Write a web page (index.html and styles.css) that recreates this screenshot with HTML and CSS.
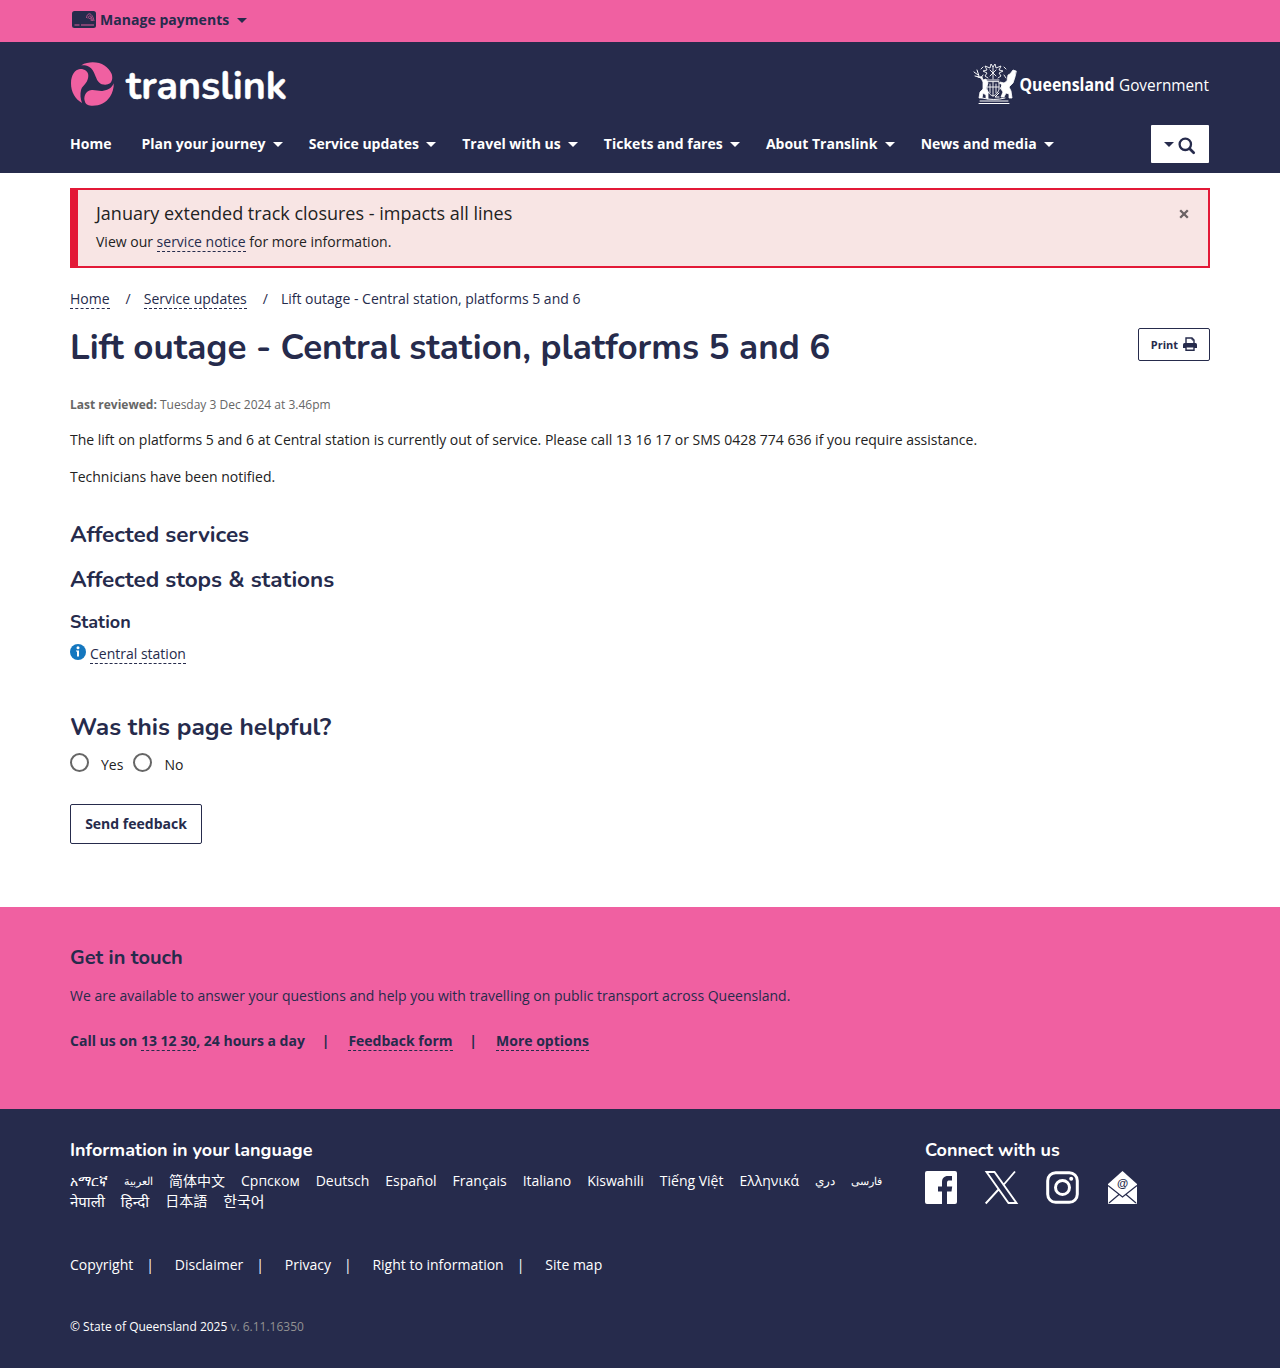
FILE: index.html
```html
<!DOCTYPE html>
<html lang="en">
<head>
<meta charset="utf-8">
<title>Lift outage - Central station, platforms 5 and 6 | Translink</title>
<link rel="stylesheet" href="styles.css">
</head>
<body>
<div class="topbar"><div class="container topbar-inner">
  <svg class="card-icon" width="24" height="17" viewBox="0 0 24 17"><rect width="24" height="17" rx="2.500" fill="#262b4c"/><path d="M2.500 14h5M9 14h13" stroke="#f060a1" stroke-width=".9"/><path d="M14.500 7c.5-6 6-6 7.500 3M16 7.500c1-4 3.500-4 4.500 2.500M17.500 8c.6-2 1.300-2 1.800 2" fill="none" stroke="#f060a1" stroke-width=".7"/></svg>
  <span class="topbar-label">Manage payments</span><i class="caret"></i>
</div></div>
<header class="header"><div class="container">
  <div class="brand">
    <svg class="logo" width="222" height="54" viewBox="0 0 222 54">
      <g fill="#f060a1">
        <path d="M11 3.400C15 1 19 .3 22.700.3c9 0 16 4.700 19 11.700 1.500 5-.2 8-1.700 9.300-2 1.500-5 1.600-8.300 1-4-2-5-5.300-6.700-9.300-1.300-3.500-2.800-6.600-6-8.200C16.500 3.500 14 3.100 11 3.400z"/>
        <path d="M1 21.300C1 13 5 7.500 10 7c4.500-.2 8.300 2.500 8.300 6.500 0 2.500-.6 4-1.600 6.200-2 3.300-5 5-5.700 8.300-1 4.500-.6 8.500 1 13C5 37 1 30 1 21.300z"/>
        <path d="M43.700 21.300C44 26 42.500 31 40 34.700c-4 6-10 9-17.300 9-4.200 0-7-1.200-7.700-4-.9-2-.9-4.500 0-6.700 1.200-3 3.500-4.700 6.700-5 4-.3 8 1.500 11.600.7 5.700-.8 8.700-3.400 10.400-7.400z"/>
      </g>
      <text class="wordmark" x="56" y="37" textLength="161" lengthAdjust="spacingAndGlyphs">translink</text>
    </svg>
    <svg class="crest" width="240" height="44" viewBox="0 0 240 44">
      <g transform="translate(0 -1)" fill="none" stroke="#fff" stroke-linecap="round">
        <path d="M6 41.500h30M7 39h28M9 36q12 3 23 0" stroke-width="1"/>
        <path d="M1 10l4 3M2 14l4 1M4 8l2 6" stroke-width="1"/>
        <path d="M5 15l3 1 2 4v7l-3 3-1 6h3l1-5 3 2v3l2 1v-7l-2-4 2-5-2-4-3 1-1-3z" fill="#fff" stroke-width=".8"/>
        <path d="M43 9l-3-1-3 4-2 1-1 6-3 2-4-1 2 4-1 3 2 3-2 5h3l2-4 3 1v4h3l-1-7-2-4 4-4 2-6z" fill="#fff" stroke-width=".8"/>
        <path d="M27 27l3-5-4-1M26 31l-4 4h4" stroke-width="1"/>
        <path d="M14 20v6c0 4 3 7 6 8 3-1 6-4 6-8v-6zM14 25h12M20 20v14M17 22v9M23 22v9" stroke-width=".9"/>
        <path d="M14 18h12M15 16l-3-2 2-3-4-2 4-1-2-4 5 2 1-4 2 3 2-3 1 4 5-2-2 4 4 1-4 2 2 3-3 2M17 8l6 6M23 8l-6 6M20 5v12M10 13l-2 3M31 13l2 3M10 5l-2 2M31 5l2 2" stroke-width=".9"/>
      </g>
      <text class="crest-strong" x="46.500" y="28" textLength="95" lengthAdjust="spacingAndGlyphs">Queensland</text>
      <text class="crest-light" x="146" y="28" textLength="90" lengthAdjust="spacingAndGlyphs">Government</text>
    </svg>
  </div>
  <nav class="nav">
    <a class="nav-home">Home</a>
    <a>Plan your journey<i class="caret"></i></a>
    <a>Service updates<i class="caret"></i></a>
    <a>Travel with us<i class="caret"></i></a>
    <a>Tickets and fares<i class="caret"></i></a>
    <a>About Translink<i class="caret"></i></a>
    <a>News and media<i class="caret"></i></a>
    <span class="search"><i class="caret caret-small"></i><svg width="18" height="18" viewBox="0 0 18 18"><circle cx="7.300" cy="7.300" r="5.700" fill="none" stroke="#262b4c" stroke-width="2.300"/><path d="M11.700 11.700l4 4" stroke="#262b4c" stroke-width="2.700" stroke-linecap="round"/></svg></span>
  </nav>
</div></header>
<main class="container main">
  <section class="alert">
    <div><div class="alert-title">January extended track closures - impacts all lines</div>
    <div class="alert-text">View our <a class="link">service notice</a> for more information.</div></div>
    <svg class="close" width="10" height="10" viewBox="0 0 10 10"><path d="M1.200 1.200l7.600 7.600M8.800 1.200L1.200 8.800" stroke="#6b6264" stroke-width="2.300"/></svg>
  </section>
  <div class="breadcrumb"><a class="link">Home</a><span class="slash">/</span><a class="link">Service updates</a><span class="slash">/</span><span>Lift outage - Central station, platforms 5 and 6</span></div>
  <div class="title-row"><h1>Lift outage - Central station, platforms 5 and 6</h1>
    <button class="print">Print<svg width="14" height="14" viewBox="0 0 14 14"><path d="M3 7V1h6l2 2v4" fill="#fff" stroke="#262b4c" stroke-width="1.400"/><path d="M9 1v2h2" fill="none" stroke="#262b4c"/><path d="M1.500 6h11q1.500 0 1.500 1.500V11H0V7.500Q0 6 1.500 6z" fill="#262b4c"/><path d="M3 9.700h8v3.500H3z" fill="#fff" stroke="#262b4c" stroke-width="1.400"/></svg></button>
  </div>
  <div class="reviewed"><b>Last reviewed:</b> Tuesday 3 Dec 2024 at 3.46pm</div>
  <p>The lift on platforms 5 and 6 at Central station is currently out of service. Please call 13 16 17 or SMS 0428 774 636 if you require assistance.</p>
  <p>Technicians have been notified.</p>
  <h2 class="services">Affected services</h2>
  <h2 class="stops">Affected stops &amp; stations</h2>
  <h3>Station</h3>
  <div class="station"><svg width="16" height="16" viewBox="0 0 16 16"><circle cx="8" cy="8" r="8" fill="#1477bf"/><circle cx="8" cy="3.700" r="1.500" fill="#fff"/><path d="M6 6.500h3v6H7V7.500H6z" fill="#fff"/></svg><a class="link">Central station</a></div>
  <h2 class="helpful">Was this page helpful?</h2>
  <div class="choices"><label><i class="radio"></i><span>Yes</span></label><label><i class="radio"></i><span>No</span></label></div>
  <button class="feedback">Send feedback</button>
</main>
<section class="touch"><div class="container">
  <h2 class="touch-title">Get in touch</h2>
  <p class="touch-text">We are available to answer your questions and help you with travelling on public transport across Queensland.</p>
  <div class="touch-links"><span>Call us on <a class="link">13 12 30</a>, 24 hours a day</span><span class="bar">|</span><a class="link">Feedback form</a><span class="bar">|</span><a class="link">More options</a></div>
</div></section>
<footer class="footer"><div class="container">
  <div class="footer-top">
    <div class="languages"><h3 class="footer-title">Information in your language</h3>
      <div class="lang-row"><span>አማርኛ</span><span class="arabic">العربية</span><span>简体中文</span><span>Српском</span><span>Deutsch</span><span>Español</span><span>Français</span><span>Italiano</span><span>Kiswahili</span><span>Tiếng Việt</span><span>Ελληνικά</span><span class="arabic dari">دري</span><span class="arabic farsi">فارسی</span></div>
      <div class="lang-row lang-row-second"><span class="larger">नेपाली</span><span class="larger">हिन्दी</span><span>日本語</span><span class="larger">한국어</span></div>
    </div>
    <div class="connect"><h3 class="footer-title">Connect with us</h3>
      <div class="social">
        <svg width="32" height="33" viewBox="0 0 32 33"><path d="M2 0h28q2 0 2 2v29q0 2-2 2h-8V20.500h4.500l.7-5H22v-3.500c0-2 .8-2.500 2.500-2.500H27V5h-4c-4 0-6 2.500-6 6v4.500h-4v5h4V33H2q-2 0-2-2V2Q0 0 2 0z" fill="#fff"/></svg>
        <svg width="33" height="33" viewBox="0 0 33 33"><path d="M1.500 1h8l22 31h-8zM30 .5L18 14.500M13.500 18.500L.7 32.500" fill="none" stroke="#fff" stroke-width="1.900"/></svg>
        <svg width="33" height="33" viewBox="0 0 33 33"><rect x="1.700" y="1.700" width="29.600" height="29.600" rx="8" fill="none" stroke="#fff" stroke-width="3"/><circle cx="16.500" cy="16.500" r="7" fill="none" stroke="#fff" stroke-width="3"/><circle cx="25.200" cy="7.800" r="2" fill="#fff"/></svg>
        <svg width="29" height="33" viewBox="0 0 29 33"><path d="M0 13L14.500 0 29 13v19q0 1-1 1H1q-1 0-1-1z" fill="#fff"/><path d="M0 14.500l14.500 11.500 14.500-11.500M1 32l10-8.500M28 32l-10-8.500" fill="none" stroke="#262b4c" stroke-width="1.200"/><text class="at" x="14.500" y="16" text-anchor="middle">@</text></svg>
      </div>
    </div>
  </div>
  <div class="legal"><a>Copyright</a><span>|</span><a>Disclaimer</a><span>|</span><a>Privacy</a><span>|</span><a>Right to information</a><span>|</span><a>Site map</a></div>
  <div class="copyright">© State of Queensland 2025 <span>v. 6.11.16350</span></div>
</div></footer>
</body>
</html>
```

FILE: styles.css
```css
*{box-sizing:border-box}
body{margin:0;background:#fff;color:#222;font:14px/20px "Open Sans","Noto Sans","Noto Sans CJK SC","Noto Sans CJK KR",sans-serif}
svg{display:block;flex:none;overflow:visible}
h1,h2,h3,p{margin:0}
h1,h2,h3{font-family:Nunito,Lato,sans-serif;font-weight:700;color:#262b4c;white-space:nowrap}
.container{width:1140px;margin:0 auto}
.caret{display:inline-block;border:5px solid transparent;border-top:5px solid currentColor;border-bottom:0}
.link{border-bottom:1px dashed #262b4c;color:#262b4c}
.topbar{height:42px;background:#f060a1;color:#262b4c}
.topbar-inner{display:flex;align-items:center;height:40px;padding-left:2px}
.card-icon{margin:-2px 4px 0 0}
.topbar-label{margin-right:8px;letter-spacing:.04px;font-weight:700}
.header{height:131px;background:#262b4c;color:#fff}
.brand{display:flex;align-items:flex-start;justify-content:space-between;padding-top:20px;height:82px;margin-right:-3px}
.wordmark{font:700 40px Nunito,Lato,sans-serif;fill:#fff;stroke:#fff;stroke-width:.4;stroke-linejoin:round}
.crest{margin-top:1px}
.crest-strong{font:700 17px "Open Sans",sans-serif;fill:#fff}
.crest-light{font:400 17px "Open Sans",sans-serif;fill:#fff}
.nav{display:flex;align-items:center;height:40px;font-weight:700;gap:26.200px;padding-right:1px}
.nav a{white-space:nowrap}
.nav-home{margin-right:3.800px}
.nav .caret{margin-left:7px;vertical-align:2px}
.search{display:flex;align-items:center;justify-content:center;gap:4px;width:58px;height:38px;margin-left:auto;background:#fff;color:#262b4c;border-radius:1px}
.search svg{margin-top:4px}
.nav .caret-small{margin:0}
.main{height:734px;padding-top:15px}
.alert{display:flex;justify-content:space-between;height:80px;border:2px solid #e31937;border-left-width:8px;background:#f8e5e4;padding:11px 19px 0 18px}
.alert-title{font-size:18px;line-height:25px;margin-bottom:6px}
.close{margin-top:8px}
.breadcrumb{display:flex;align-items:flex-start;margin-top:21px;line-height:19px;color:#262b4c}
.slash{margin:0 13px 0 16px}
.title-row{display:flex;justify-content:space-between;margin-top:19px;height:50px}
h1{font-size:35px;line-height:40px}
button{background:#fff;border:1px solid #262b4c;border-radius:2px;color:#262b4c;font-family:"Open Sans",sans-serif;font-weight:700}
.print{display:flex;align-items:center;justify-content:center;gap:5px;width:72px;height:33px;padding:0;font-size:11px}
.print svg{margin-top:-1px}
.reviewed{margin:17px 0;font-size:12px;line-height:20px;color:#666}
p{margin-bottom:17px;line-height:20px}
.reviewed + p{margin-top:-2px}
.services,.stops{font-size:22.500px;line-height:30px}
.services{margin-top:33px}
.stops{margin-top:15px}
.main h3{font-size:18px;line-height:24px;margin-top:15px}
.station{display:flex;align-items:flex-start;gap:4px;margin-top:10px;height:22px}
.station .link{line-height:19px}
.helpful{font-size:24.500px;line-height:34px;margin-top:44px}
.choices{display:flex;gap:10px;margin-top:9px;height:22px}
.choices label{display:flex;gap:12px}
.choices span{padding-top:2px}
.radio{width:19px;height:19px;border:2px solid #666;border-radius:50%}
.feedback{display:block;margin-top:29px;width:132px;height:40px;font-size:14px;padding:0 0 2px}
.touch{height:202px;background:#f060a1;color:#262b4c;padding-top:36px}
.touch-title{font-size:20px;line-height:30px}
.touch-text{margin:13px 0 25px}
.touch-links{display:flex;font-weight:700;line-height:19px}
.bar{margin:0 19px 0 16.800px}
.footer{height:259px;background:#262b4c;color:#fff;padding-top:29px}
.footer-top{display:flex;height:117px}
.languages{width:855px}
.footer-title{color:#fff;font-size:18px;line-height:25px}
.lang-row{display:flex;gap:16px;height:21px;line-height:20px;margin-top:8px;white-space:nowrap}
.lang-row-second{margin-top:-1px}
.larger{font-size:15px}
.arabic{font-size:11.400px}
.dari{font-size:12px}
.farsi{font-size:10.500px}
.social{display:flex;align-items:flex-start;gap:28px;margin-top:9px}
.lang-row-second + .social{margin-top:8px}
.social{margin-top:8px}
.social svg:last-child{margin-left:1px}
.at{font:600 11.500px "Liberation Sans",sans-serif;fill:#262b4c}
.legal{display:flex;line-height:20px}
.legal span{margin:0 20.800px 0 13px}
.copyright{margin-top:42px;font-size:12px;line-height:20px}
.copyright span{color:#929292}
```
